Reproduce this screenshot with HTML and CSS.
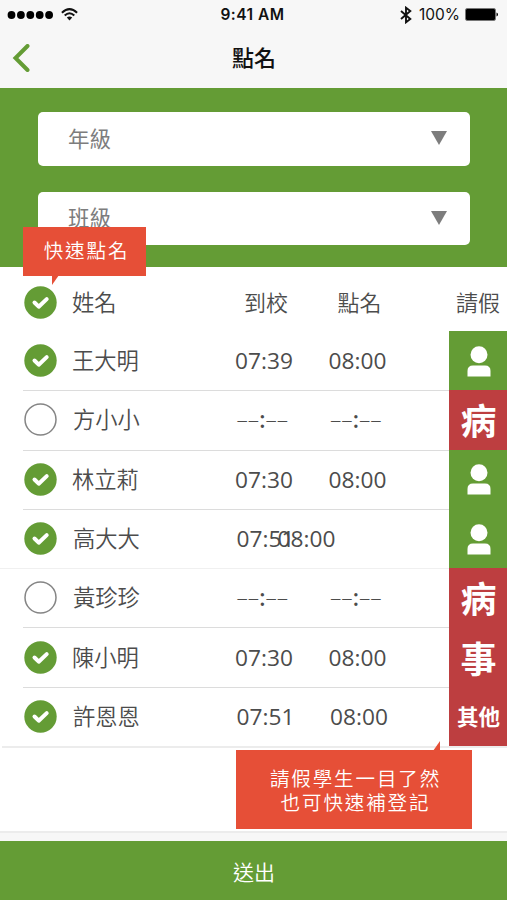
FILE: index.html
```
<!DOCTYPE html>
<html lang="zh-Hant">
<head>
    <meta charset="UTF-8">
    <meta name="viewport" content="width=device-width, initial-scale=1.0">
    <title>點名</title>
    <link rel="stylesheet" href="styles.css">
</head>
<body>

<svg class="defs" width="0" height="0">
    <symbol id="check" viewBox="0 0 33 33">
        <circle cx="16.5" cy="16.5" r="16.2" fill="#649c35"/>
        <path d="M10.5 16.5l4.2 4.2 8-7.6" fill="none" stroke="#fff" stroke-width="4" stroke-linecap="round" stroke-linejoin="round"/>
    </symbol>
    <symbol id="empty" viewBox="0 0 33 33">
        <circle cx="16.5" cy="16.5" r="15.5" fill="#fff" stroke="#858585" stroke-width="1.5"/>
    </symbol>
    <symbol id="person" viewBox="0 0 24 31">
        <circle cx="12" cy="8.7" r="8.5" fill="#fff"/>
        <path d="M.5 30.5v-5.500q0-5.500 5.500-5.500h12q5.500 0 5.500 5.500v5.500z" fill="#fff"/>
    </symbol>
</svg>

<header>
    <div class="status-bar">
        <div class="signal">
            <svg width="46" height="10" viewBox="0 0 46 10"><circle cx="4.500" cy="5" r="3.900"/><circle cx="13.900" cy="5" r="3.900"/><circle cx="23.300" cy="5" r="3.900"/><circle cx="32.700" cy="5" r="3.900"/><circle cx="42.100" cy="5" r="3.900"/></svg>
            <svg width="17" height="13" viewBox="0 0 17 13" fill="none" stroke="#111" stroke-width="2"><path d="M.9 4.8Q8.5-2.600 16.100 4.800M3.700 7.500Q8.500 2.900 13.300 7.500"/><path d="M5.800 9.600Q8.500 7.200 11.200 9.600L8.500 12.400z" fill="#111" stroke="none"/></svg>
        </div>
        <div class="clock">9:41 AM</div>
        <div class="battery">
            <svg width="12" height="18" viewBox="0 0 12 18" fill="none" stroke="#111" stroke-width="1.900"><path d="M1 5l9.300 8L6 16.300V1.700L10.300 5 1 13"/></svg>
            <span>100%</span>
            <svg width="33" height="13" viewBox="0 0 33 13"><rect x=".5" y=".5" width="30" height="12" rx="1.500" fill="#f7f7f7" stroke="#777"/><rect x="1" y="1" width="29" height="11" rx="1"/><path d="M31.500 4.500q1.500.5 1.500 2t-1.500 2z"/></svg>
        </div>
    </div>
    <div class="title-bar">
        <svg class="back" width="18" height="28" viewBox="0 0 18 28"><path d="M15.500 2L3.500 14l12 12" fill="none" stroke="#649c35" stroke-width="4" stroke-linecap="round"/></svg>
        <h1>點名</h1>
    </div>
</header>

<div class="filters">
    <div class="select">年級<span class="arrow"></span></div>
    <div class="select">班級<span class="arrow"></span></div>
</div>

<main>
    <div class="tip tip-top">快速點名</div>
    <div class="row head">
        <svg class="box"><use href="#check"/></svg>
        <span class="name">姓名</span>
        <span class="time">到校</span>
        <span class="time">點名</span>
        <span class="leave">請假</span>
    </div>
    <div class="row">
        <svg class="box"><use href="#check"/></svg>
        <span class="name">王大明</span>
        <span class="time">07:39</span>
        <span class="time">08:00</span>
        <span class="tag"><svg class="person"><use href="#person"/></svg></span>
    </div>
    <div class="row shift">
        <svg class="box"><use href="#empty"/></svg>
        <span class="name">方小小</span>
        <span class="time none">––<b>:</b>––</span>
        <span class="time none">––<b>:</b>––</span>
        <span class="tag red">病</span>
    </div>
    <div class="row">
        <svg class="box"><use href="#check"/></svg>
        <span class="name">林立莉</span>
        <span class="time">07:30</span>
        <span class="time">08:00</span>
        <span class="tag"><svg class="person"><use href="#person"/></svg></span>
    </div>
    <div class="row shift faint">
        <svg class="box"><use href="#check"/></svg>
        <span class="name">高大大</span>
        <span class="time tight">07:51</span>
        <span class="time">08:00</span>
        <span class="tag"><svg class="person"><use href="#person"/></svg></span>
    </div>
    <div class="row shift">
        <svg class="box"><use href="#empty"/></svg>
        <span class="name">黃珍珍</span>
        <span class="time none">––<b>:</b>––</span>
        <span class="time none">––<b>:</b>––</span>
        <span class="tag red">病</span>
    </div>
    <div class="row">
        <svg class="box"><use href="#check"/></svg>
        <span class="name">陳小明</span>
        <span class="time">07:30</span>
        <span class="time">08:00</span>
        <span class="tag red">事</span>
    </div>
    <div class="row shift last">
        <svg class="box"><use href="#check"/></svg>
        <span class="name">許恩恩</span>
        <span class="time">07:51</span>
        <span class="time">08:00</span>
        <span class="tag red small">其他</span>
    </div>
    <div class="tip tip-bottom">請假學生一目了然<br>也可快速補登記</div>
</main>

<button class="submit">送出</button>

</body>
</html>
```

FILE: styles.css
```
* { box-sizing: border-box; }
body { font-family: "Open Sans", "Noto Sans CJK TC", sans-serif; margin: 0; height: 900px; display: flex; flex-direction: column; background-color: #fff; color: #4c4c4c; overflow: hidden; }
.defs { position: absolute; }
header { height: 88px; background-color: #f7f7f7; color: #111; }
.status-bar { display: grid; grid-template-columns: 1fr auto 1fr; align-items: center; height: 29px; padding: 0 9px 0 7px; font-family: Inter, sans-serif; font-size: 16px; }
.signal { display: flex; align-items: center; gap: 8px; }
.clock { font-weight: 600; font-size: 15.5px; letter-spacing: 0.5px; }
.battery { display: flex; align-items: center; justify-content: flex-end; gap: 5px; }
.battery span { margin-left: 2px; font-size: 15.5px; }
.title-bar { display: flex; align-items: center; height: 57px; padding-left: 12px; }
.title-bar h1 { flex: 1; margin: 0 30px 0 0; padding: 0 0 4px 1px; text-align: center; font-size: 22px; font-weight: 500; font-family: "Noto Sans CJK TC", sans-serif; }
.filters { display: flex; flex-direction: column; gap: 26px; height: 179px; padding: 24px 37px 0 38px; background-color: #649c35; }
.select { display: flex; align-items: center; justify-content: space-between; height: 53.5px; padding: 0 23px 3px 30px; border-radius: 5px; background-color: #fff; color: #7d7d7d; font-size: 21.5px; }
.arrow { border: 8px solid transparent; border-top: 14px solid #7d7d7d; border-bottom: 0; margin-top: 2px; }
main { position: relative; flex: 1; border-bottom: 2px solid #ececec; }
.row { display: flex; align-items: center; height: 59.3px; padding-left: 24px; font-size: 22.7px; position: relative; }
.row::after { content: ""; position: absolute; left: 23px; right: 58px; bottom: -1px; height: 1px; background-color: #dcdcdc; }
.head { height: 64px; padding-top: 6px; }
.head::after { display: none; }
.faint::after { left: 0; background-color: #f0f0f0; }
.last::after { left: 2px; right: 0; bottom: -2px; height: 2px; background-color: #ececec; }
.box { width: 33px; height: 33px; }
.name { width: 178px; padding: 0 0 3px 15px; font-family: "Noto Sans CJK TC", sans-serif; font-weight: 350; font-size: 22.3px; }
.time { width: 93.5px; white-space: nowrap; }
.head .time { padding: 0 0 3px 9px; font-size: 22px; font-weight: 350; }
.head .leave { margin-left: 34px; padding-bottom: 3px; font-size: 22px; font-weight: 350; }
.shift .name { width: 179.5px; padding-left: 16px; }
.time.none { font-weight: 300; }
.none b { font-weight: 600; }
.time.tight { width: 41px; }
.tag { display: flex; align-items: center; justify-content: center; align-self: stretch; width: 58px; margin-left: auto; background-color: #649c35; color: #fff; font-family: "Noto Sans CJK TC", sans-serif; font-size: 36px; font-weight: 700; line-height: 1; padding: 0 0 1px 1px; }
.tag.red { background-color: #bd3e40; }
.tag.small { font-size: 21.5px; }
.shift .time + .time { margin-right: -1.5px; }
.person { width: 24px; height: 31px; margin-top: 2px; }
.tip { position: absolute; z-index: 1; background-color: #e64f37; color: #fff; font-family: "Noto Sans CJK TC", sans-serif; font-weight: 350; font-size: 19.5px; letter-spacing: 1.9px; text-align: center; }
.tip::after { content: ""; position: absolute; background-color: #e64f37; }
.tip-top { left: 23px; top: -40px; width: 123px; height: 49px; line-height: 46px; padding-left: 4px; }
.tip-top::after { left: 29px; top: 48px; width: 7px; height: 10px; clip-path: polygon(0 0, 100% 0, 0 100%); }
.tip-bottom { left: 236px; top: 483px; width: 236px; height: 79px; padding-top: 16px; padding-left: 3px; line-height: 24px; }
.tip-bottom::after { right: 32px; top: -9px; width: 7px; height: 10px; clip-path: polygon(100% 0, 100% 100%, 0 100%); }
.submit { height: 67px; border: 0; border-top: 8px solid #f7f7f7; padding: 0 0 0 1px; background-color: #649c35; color: #fff; font-family: "Noto Sans CJK TC", sans-serif; font-weight: 350; font-size: 21px; }
```
